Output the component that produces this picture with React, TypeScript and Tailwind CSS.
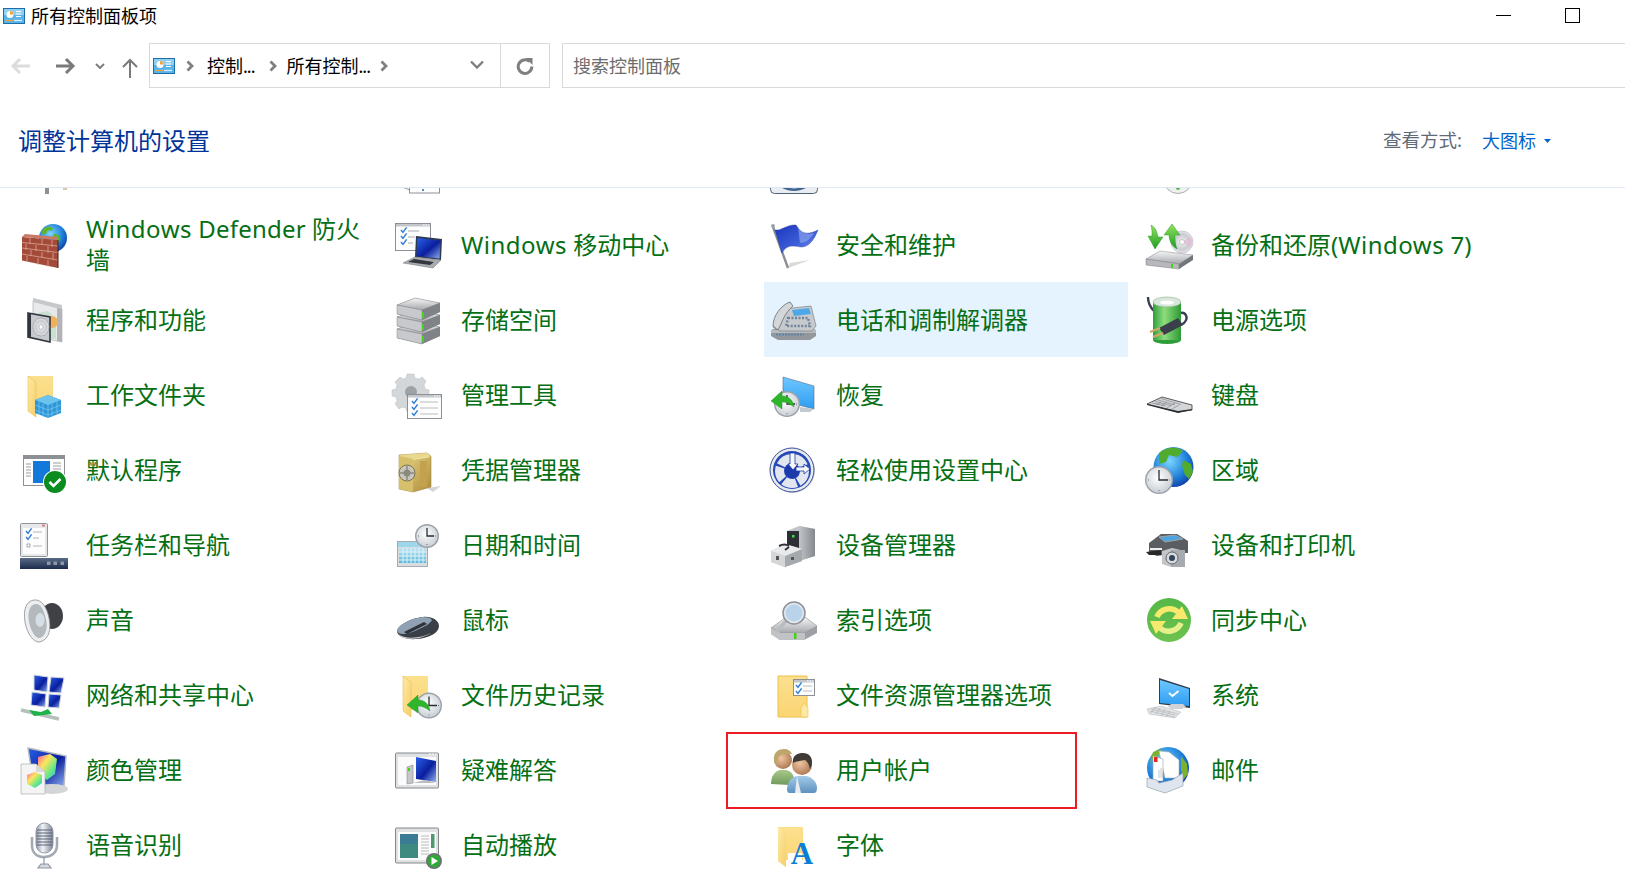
import React from "react";

const Defs = () => (
  <svg className="absolute w-0 h-0" aria-hidden="true">
    <defs>
      <linearGradient id="fold" x1="0" y1="0" x2="0" y2="1"><stop offset="0" stopColor="#fbe08e" /><stop offset="1" stopColor="#fbd573" /></linearGradient>
      <linearGradient id="flap" x1="0" y1="0" x2="1" y2="1"><stop offset="0" stopColor="#fdeaa6" /><stop offset="1" stopColor="#f6cf68" /></linearGradient>
      <linearGradient id="metal" x1="0" y1="0" x2="0" y2="1"><stop offset="0" stopColor="#f6f6f6" /><stop offset="1" stopColor="#a5a8ab" /></linearGradient>
      <linearGradient id="steel" x1="0" y1="0" x2="1" y2="0"><stop offset="0" stopColor="#c3c6c9" /><stop offset="1" stopColor="#85888c" /></linearGradient>
      <linearGradient id="flag" x1="0" y1="0" x2="1" y2="1"><stop offset="0" stopColor="#1c35bb" /><stop offset="0.6" stopColor="#3d5fd9" /><stop offset="1" stopColor="#8aa6f2" /></linearGradient>
      <linearGradient id="deep" x1="0" y1="0" x2="1" y2="1"><stop offset="0" stopColor="#2a62e8" /><stop offset="0.55" stopColor="#0a1e9e" /><stop offset="1" stopColor="#8fb0ee" /></linearGradient>
      <linearGradient id="screen" x1="0" y1="0" x2="0" y2="1"><stop offset="0" stopColor="#6fc7ff" /><stop offset="1" stopColor="#2e9df2" /></linearGradient>
      <linearGradient id="green" x1="0" y1="0" x2="0" y2="1"><stop offset="0" stopColor="#8fe35c" /><stop offset="1" stopColor="#1f9c25" /></linearGradient>
      <linearGradient id="batt" x1="0" y1="0" x2="1" y2="0"><stop offset="0" stopColor="#2f9e3a" /><stop offset="0.4" stopColor="#8fdc7e" /><stop offset="1" stopColor="#2c9a35" /></linearGradient>
      <linearGradient id="gold" x1="0" y1="0" x2="1" y2="1"><stop offset="0" stopColor="#ecd98c" /><stop offset="1" stopColor="#ae8d3a" /></linearGradient>
      <linearGradient id="bar" x1="0" y1="0" x2="0" y2="1"><stop offset="0" stopColor="#5a6b86" /><stop offset="1" stopColor="#1a2b4d" /></linearGradient>
      <linearGradient id="mic" x1="0" y1="0" x2="1" y2="0"><stop offset="0" stopColor="#8f97a8" /><stop offset="0.4" stopColor="#f2f4f8" /><stop offset="1" stopColor="#7e8698" /></linearGradient>
      <linearGradient id="syncg" x1="0" y1="0" x2="0" y2="1"><stop offset="0" stopColor="#55b848" /><stop offset="1" stopColor="#6cc24f" /></linearGradient>
      <linearGradient id="shirtB" x1="0" y1="0" x2="0" y2="1"><stop offset="0" stopColor="#a4cbe8" /><stop offset="1" stopColor="#5d91bf" /></linearGradient>
      <linearGradient id="shirtG" x1="0" y1="0" x2="0" y2="1"><stop offset="0" stopColor="#a9c98a" /><stop offset="1" stopColor="#6f9a5b" /></linearGradient>
      <linearGradient id="rainbow" x1="0" y1="0" x2="1" y2="1"><stop offset="0" stopColor="#ff5ca8" /><stop offset="0.35" stopColor="#ffe65c" /><stop offset="0.7" stopColor="#5ce88a" /><stop offset="1" stopColor="#4ca8ff" /></linearGradient>
      <linearGradient id="cal" x1="0" y1="0" x2="0" y2="1"><stop offset="0" stopColor="#bfe2f2" /><stop offset="1" stopColor="#58b9db" /></linearGradient>
      <radialGradient id="globe" cx="0.4" cy="0.35" r="0.75"><stop offset="0" stopColor="#7cd6ff" /><stop offset="0.6" stopColor="#1e7fd8" /><stop offset="1" stopColor="#0c2f9c" /></radialGradient>
      <radialGradient id="clock" cx="0.45" cy="0.4" r="0.7"><stop offset="0" stopColor="#ffffff" /><stop offset="1" stopColor="#c2c9d0" /></radialGradient>
      <radialGradient id="cd" cx="0.5" cy="0.5" r="0.5"><stop offset="0" stopColor="#f4f4f4" /><stop offset="0.7" stopColor="#c8cbd0" /><stop offset="1" stopColor="#e9e9ee" /></radialGradient>
      <radialGradient id="skin" cx="0.4" cy="0.4" r="0.7"><stop offset="0" stopColor="#eec6a0" /><stop offset="1" stopColor="#a8704c" /></radialGradient>
    </defs>
  </svg>
);

const Clock = ({ cx, cy, r }: { cx: number; cy: number; r: number }) => (
  <g>
    <circle cx={cx} cy={cy} r={r} fill="#9aa1a9" />
    <circle cx={cx} cy={cy} r={r - 1.4} fill="url(#clock)" />
    <path d={`M${cx} ${cy - r + 4}V${cy}H${cx + r - 5}`} fill="none" stroke="#2a2e33" strokeWidth="1.300" />
    <path d={`M${cx} ${cy + r - 3}v-1M${cx - r + 3} ${cy}h1M${cx + r - 3} ${cy}h-1`} stroke="#6d747c" strokeWidth="1" />
  </g>
);
const Tick = ({ x, y, c = "#2f7fd6" }: { x: number; y: number; c?: string }) => (
  <path d={`M${x} ${y + 2}l2 2.400 3.600-5`} fill="none" stroke={c} strokeWidth="1.500" />
);
const Win = ({ x, y, w, h }: { x: number; y: number; w: number; h: number }) => (
  <g>
    <rect x={x + 0.5} y={y + 0.5} width={w - 1} height={h - 1} fill="#fdfdfd" stroke="#8c9096" />
    <rect x={x + 1} y={y + 1} width={w - 2} height="2.500" fill="#c3c7cb" />
    <path d={`M${x + w - 8} ${y + 2}h1.600M${x + w - 5.5} ${y + 2}h1.600M${x + w - 3} ${y + 2}h1`} stroke="#ffffff" strokeWidth="1" />
  </g>
);
const Land = () => (
  <g fill="#5fb52f">
    <path d="M15 6c5-3 11-3 14 0l-3 4-5-1-2 5-5 1-2-3z" />
    <path d="M30 14l7 2 2 6-3 5-4-3-3-6z" />
  </g>
);
const Tall = () => (
  <g>
    <path d="M8 5h25v34H16v7l-8-6z" fill="url(#fold)" />
    <path d="M8 5l8 6v35l-8-6z" fill="url(#flap)" />
    <path d="M8 5l8 6v35l-8-6z" fill="none" stroke="#e8c15a" strokeWidth="0.600" />
  </g>
);
const Hdd = ({ y = 0 }: { y?: number }) => (
  <g transform={`translate(0 ${y})`}>
    <path d="M2 8l18-7 25 5v9l-18 8L2 17z" fill="#8d9094" />
    <path d="M2 8l18-7 25 5-18 7z" fill="url(#metal)" stroke="#8a8d91" strokeWidth="0.500" />
    <path d="M2 8l25 5v10L2 17z" fill="#c7c9cc" stroke="#85888c" strokeWidth="0.500" />
    <path d="M27 13l18-7v9l-18 8z" fill="#7f8286" />
    <rect x="27" y="15" width="2" height="6" fill="#45d21c" />
  </g>
);
const Arrow = ({ x, y }: { x: number; y: number }) => (
  <path transform={`translate(${x} ${y})`} d="M0 10l11-10v5c7 0 11 4 12 11-4-3-7-5-12-5v7z" fill="#2fb52b" stroke="#1d8a22" strokeWidth="0.400" />
);

const I = {
  p0: () => (<g><rect x="25" y="41" width="4" height="7" fill="#8d9196" /><rect x="43" y="42" width="4" height="2" fill="#d9c9a8" /></g>),
  p1: () => (<g><path d="M7 41l8 3" stroke="#9a9da1" /><rect x="14.500" y="38" width="30" height="9" fill="#fff" stroke="#8c9096" /><rect x="27" y="43" width="2" height="2" fill="#3c8fe0" /></g>),
  p2: () => (<g><rect x="0.500" y="20" width="47" height="27.500" rx="4" fill="#e9edf1" stroke="#4d6078" /><path d="M12 38c8 6 16 6 24 0v4c-8 4-16 4-24 0z" fill="#41658f" /></g>),
  p3: () => (<g><circle cx="33" cy="33" r="14.500" fill="#f0f0f0" stroke="#a9acb0" /><circle cx="33" cy="42" r="2" fill="#55b848" /></g>),
  firewall: () => (
    <g>
      <circle cx="33" cy="17" r="14" fill="url(#globe)" />
      <g transform="translate(13 3) scale(.7)"><Land /></g>
      <path d="M2 16l36 3v28L2 39.500z" fill="#a34a3a" />
      <path d="M2 16l3-3 33 3v3z" fill="#c87a66" />
      <path d="M2 21.500l36 3.500M2 27l36 4.500M2 33l36 6M10 17v6M22 18v6M32 19v7M6 23v6M16 24v6M28 25v7M11 29v6M22 31v6M33 32v7M7 35v6M18 37v7M28 39v7" stroke="#dba892" strokeWidth="0.800" fill="none" />
      <path d="M38 19v28" stroke="#4a1f18" />
    </g>
  ),
  mobility: () => (
    <g>
      <Win x={0} y={2} w={36} h={28} />
      <Tick x={6} y={7} /><Tick x={6} y={13} /><Tick x={6} y={19} />
      <path d="M13 10h11M13 16h7M13 22h5" stroke="#a8abb0" />
      <path d="M21 15l26 3-1 21-26-3z" fill="#2d3a4f" />
      <path d="M22.500 17l23 2.500-1 18-23-2.500z" fill="url(#deep)" />
      <path d="M20 36l26 3-8 8-30-5z" fill="#a9adb2" stroke="#6a6e73" strokeWidth="0.500" />
      <path d="M19 38l20 3-4 3-22-3z" fill="#34383e" />
    </g>
  ),
  flag: () => (
    <g>
      <path d="M18 47l22-8-20 3z" fill="#d9d9d9" />
      <path d="M3 6l15 41" stroke="#8b8f94" strokeWidth="2.400" />
      <circle cx="3" cy="5" r="2" fill="#9ea2a7" />
      <path d="M5 9c6 1 13-6 21-5 4 6 8 12 22 5-4 10-9 17-17 17-8-1-14-3-19 6z" fill="url(#flag)" stroke="#1b2d9a" strokeWidth="0.400" />
      <path d="M28 6c4 6 9 8 16 6-4 6-8 10-14 10" fill="#9fb6f4" opacity="0.550" />
    </g>
  ),
  backup: () => (
    <g>
      <circle cx="37" cy="21" r="11" fill="url(#cd)" stroke="#a9acb0" strokeWidth="0.500" />
      <path d="M37 21l9-5a11 11 0 0 1 0 10z" fill="#e8b8d8" opacity="0.700" />
      <circle cx="37" cy="21" r="2.500" fill="#fff" stroke="#999" strokeWidth="0.500" />
      <path d="M1 38l14-8 33 4-14 9z" fill="url(#metal)" stroke="#85888c" strokeWidth="0.500" />
      <path d="M1 38l33 5v5L1 44z" fill="#b6b8bb" stroke="#7a7d81" strokeWidth="0.500" />
      <path d="M34 43l14-9v5l-14 9z" fill="#73767a" />
      <rect x="26" y="43" width="2" height="4" fill="#45d21c" />
      <path d="M6 4c4 2 6 6 7 12h5L10 28 3 15h4c0-4 0-7-1-11z" fill="url(#green)" stroke="#1b8a22" strokeWidth="0.400" />
      <path d="M27 3l8 11h-5c0 5 0 9 2 14-5-3-8-8-8-14h-5z" fill="url(#green)" stroke="#1b8a22" strokeWidth="0.400" />
    </g>
  ),
  programs: () => (
    <g>
      <path d="M13 5l29 8v33l-29-6z" fill="#e8e9ea" stroke="#a0a3a6" strokeWidth="0.600" />
      <path d="M13 2l29 7v4L13 6z" fill="#c6c8ca" />
      <path d="M37 12l5 1v33l-5-1z" fill="#b2b4b7" />
      <path d="M18 17l10-2 8 8v20H20z" fill="#c9dfcf" />
      <circle cx="32" cy="26" r="6" fill="#f0b15e" />
      <path d="M8 17l22 4v25L8 41z" fill="#c6c9cd" stroke="#32363c" strokeWidth="1.600" />
      <path d="M8 17l3 .5v24L8 41z" fill="#32363c" />
      <ellipse cx="21" cy="31" rx="8" ry="9" fill="url(#cd)" stroke="#8d9095" strokeWidth="0.600" />
      <ellipse cx="21" cy="31" rx="2" ry="2.300" fill="#fff" stroke="#8d9095" strokeWidth="0.500" />
    </g>
  ),
  storage: () => (<g><Hdd y={25} /><Hdd y={13} /><Hdd y={1} /></g>),
  phone: () => (
    <g>
      <path d="M1 34l8-3h30l7 3v6l-6 4H8l-7-4z" fill="#93979b" />
      <path d="M1 34h45v3H1z" fill="#b8bbbe" />
      <path d="M6 38.500h28" stroke="#5f86a6" strokeWidth="2.200" strokeDasharray="2 1" />
      <path d="M13 13l28-3 5 20-4 5H10L3 31z" fill="#c6cacd" stroke="#7d8185" strokeWidth="0.700" />
      <path d="M22 14l17-2 2 6-17 2z" fill="#4ea8e8" />
      <path d="M18 22h20l2 8H16z" fill="none" stroke="#6f849a" strokeWidth="2.400" strokeDasharray="2 1.500" />
      <path d="M3 30C3 20 11 9 20 6l3 4c-5 4-10 12-12 18l-3 6z" fill="#d4d7d9" stroke="#666a6e" strokeWidth="0.800" />
    </g>
  ),
  power: () => (
    <g>
      <path d="M3 1c0 8 4 12 6 14M33 18c8-4 11 4 6 9l-10 6" fill="none" stroke="#3a4052" strokeWidth="2.400" />
      <ellipse cx="22" cy="44" rx="14" ry="4" fill="#2f9e3a" />
      <rect x="8" y="6" width="28" height="38" fill="url(#batt)" />
      <ellipse cx="22" cy="6" rx="14" ry="5" fill="#d9e6da" stroke="#8bb48d" strokeWidth="0.600" />
      <ellipse cx="22" cy="6.500" rx="7" ry="2" fill="#fff" />
      <path d="M14 32l19-10 5 7-19 10z" fill="#3a3f49" />
      <path d="M15 32l-10 4M18 37l-10 4" stroke="#d2a768" strokeWidth="2.200" />
    </g>
  ),
  work: () => (
    <g>
      <Tall />
      <path d="M15 29l13-5 13 5v13l-13 5-13-5z" fill="#2f97d8" />
      <path d="M15 29l13 5 13-5-13-5z" fill="#6cc3ee" />
      <path d="M19 31v13M23 33v13M28 34v13M32 33v12M37 31v12M15 34l13 5 13-5M15 39l13 5 13-5" stroke="#88d0f2" strokeWidth="0.600" fill="none" />
    </g>
  ),
  admin: () => (
    <g>
      <path d="M12 3h7l1 4 4 1 3-2 4 4-2 4 1 4 4 1v6l-4 1-1 4 2 4-4 4-3-2-4 1-1 4h-7l-1-4-4-1-3 2-4-5 2-3-1-4-4-1v-6l4-1 1-4-2-3 5-5 3 2 3-1z" fill="#d3d7da" stroke="#babdc1" strokeWidth="0.500" />
      <circle cx="16" cy="21" r="6" fill="#9da2a7" />
      <Win x={12} y={23} w={35} h={25} />
      <Tick x={17} y={28} /><Tick x={17} y={34} /><Tick x={17} y={40} />
      <path d="M25 31h18M25 37h18M25 43h18" stroke="#b9bcc0" />
    </g>
  ),
  recovery: () => (
    <g>
      <path d="M13 6l31 9v23l-31-8z" fill="url(#screen)" stroke="#4d6d8a" strokeWidth="0.600" />
      <path d="M30 36l14 2-4 3H30z" fill="#c5cace" />
      <Clock cx={17} cy={33} r={13} />
      <Arrow x={1} y={20} />
    </g>
  ),
  keyboard: () => (
    <g>
      <path d="M2 33l15-7 30 8v5l-14 2z" fill="#d3d5d8" stroke="#333" strokeWidth="0.800" />
      <path d="M2 33v1l31 8 14-3v-1l-14 2z" fill="#2b2e32" />
      <path d="M7 32l14 3M10 30.500l16 4M13 29l17 5M16 27.500l20 6M11 34l5-3M16 35l6-4M22 37l8-5M27 38l7-4" stroke="#7b7e82" strokeWidth="0.600" fill="none" />
    </g>
  ),
  defaults: () => (
    <g>
      <rect x="3.500" y="9.500" width="41" height="30" fill="#fdfdfd" stroke="#8d9196" />
      <rect x="4" y="10" width="40" height="3" fill="#8d9196" />
      <path d="M6 18h5M6 21h5M6 24h5M6 27h5M6 30h5M33 17h8M33 20h8M33 23h8M33 26h8" stroke="#9b9ea3" />
      <rect x="13" y="15" width="17" height="22" fill="#1278d9" />
      <circle cx="35" cy="36" r="12" fill="#fff" />
      <circle cx="35" cy="36" r="11" fill="#0b8c1e" />
      <path d="M29.500 36l4 4 7-7" fill="none" stroke="#fff" strokeWidth="2.600" />
    </g>
  ),
  safe: () => (
    <g>
      <path d="M32 42l14-2-8 6z" fill="#d5d5d5" />
      <path d="M4 9l28-2 4 3v31l-18 5-14-3z" fill="url(#gold)" stroke="#8d7430" strokeWidth="0.500" />
      <path d="M4 10l14 3v33l-14-3z" fill="#d7c06b" />
      <path d="M18 13l14-3 4 1-18 3z" fill="#f4e6a6" />
      <path d="M4 9l14 4 18-3-4-3z" fill="#e9d88f" />
      <path d="M25 15h7v26h-7z" fill="#c2a24c" />
      <circle cx="12" cy="27" r="8" fill="#c8c6bd" stroke="#7d7650" />
      <circle cx="12" cy="27" r="3.500" fill="#8c8a7d" />
      <path d="M12 20v14M5 27h14" stroke="#8c8a7d" strokeWidth="1.500" />
    </g>
  ),
  ease: () => (
    <g>
      <circle cx="23" cy="25" r="22" fill="#d6d8db" />
      <circle cx="22" cy="24" r="22" fill="#e8ebee" stroke="#3a4e94" strokeWidth="1" />
      <circle cx="22" cy="24" r="19" fill="#2648b8" />
      <circle cx="22" cy="25" r="12.500" fill="none" stroke="#e2e6ef" strokeWidth="9" strokeDasharray="13 2" />
      <circle cx="22" cy="25" r="7" fill="#1c3aa8" />
      <path d="M20 7h5v11h3l-5 6-5-6h2zM26 21h8v-3l6 5-6 5v-3h-8z" fill="#f6f7fa" stroke="#1c3aa8" strokeWidth="0.800" />
    </g>
  ),
  region: () => (
    <g>
      <circle cx="28.500" cy="21" r="20" fill="url(#globe)" />
      <path d="M14 7c7-6 18-7 24-2l-6 6-8-2-3 7-7 2zM38 14l8 4 2 8-4 7-4-4-3-9z" fill="#51ab2c" />
      <Clock cx={14} cy={34} r={14} />
    </g>
  ),
  taskbar: () => (
    <g>
      <rect x="0.500" y="2.500" width="27" height="33" rx="1" fill="#e6e8ea" stroke="#8f9399" />
      <rect x="3" y="7" width="22" height="26" fill="#fdfdfd" />
      <rect x="22" y="3.500" width="3" height="2" fill="#d98080" />
      <Tick x={6} y={8} /><Tick x={6} y={14} />
      <rect x="7" y="23" width="3" height="3" fill="#fff" stroke="#777" strokeWidth="0.600" />
      <path d="M13 11h9M13 17h6M13 25h9" stroke="#b1b4b8" />
      <rect x="0" y="37" width="48" height="11" fill="url(#bar)" />
      <path d="M27 40.500h3.500v3.500H27zM33.500 40.500H37v3.500h-3.500zM40.500 40.500H44v3.500h-3.500z" fill="#8c97a8" />
    </g>
  ),
  date: () => (
    <g>
      <rect x="2.500" y="20.500" width="30" height="25" fill="#d9dde0" stroke="#a7abaf" />
      <rect x="3" y="21" width="29" height="5" fill="#9fd7ea" />
      <rect x="4" y="27" width="27" height="15" fill="url(#cal)" />
      <path d="M8 27v15M12 27v15M16 27v15M20 27v15M24 27v15M28 27v15M4 31h27M4 35h27M4 39h27" stroke="#e8f6fb" strokeWidth="0.900" />
      <Clock cx={32} cy={15} r={12} />
    </g>
  ),
  device: () => (
    <g>
      <path d="M17 10l12-5 16 3v27l-16 5-12-1z" fill="#c3c5c8" />
      <path d="M17 10h12v26H17z" fill="#2c2f33" />
      <path d="M29 5l16 3v27l-16 5z" fill="url(#steel)" />
      <rect x="22" y="14" width="2.500" height="2.500" fill="#3fdc4a" />
      <path d="M1 30l14-7 17 5v12l-17 6-14-5z" fill="#c5c7ca" />
      <path d="M1 30l14 5v11l-14-5z" fill="#d4d6d8" />
      <path d="M15 35l17-7v12l-17 6z" fill="#a5a8ac" />
      <path d="M1 30l14-7 17 5-17 7z" fill="#e9eaeb" />
      <rect x="6" y="35" width="3" height="4" fill="#555" />
      <rect x="21" y="36" width="3" height="3" fill="#555" />
      <path d="M9 25c4-2 7-2 10 0M15 29l4-3" fill="none" stroke="#2f3237" strokeWidth="2" />
    </g>
  ),
  printer: () => (
    <g>
      <path d="M4 22l12-9h16l11 7v12H30l-18 3-8-3z" fill="#5a5d61" />
      <path d="M14 16l16-2 8 4-18 3z" fill="#4fa4e0" stroke="#9fa3a8" strokeWidth="1" />
      <path d="M1 31l15-2v5H4z" fill="#26282b" />
      <path d="M5 27h12v2H5z" fill="#ededed" />
      <path d="M17 30l10-3 13 3v16H26l-9-3z" fill="#c3c5c8" />
      <rect x="26" y="29" width="14" height="17" fill="#a7aaae" />
      <circle cx="27" cy="37" r="6" fill="#d9dbde" stroke="#63666a" />
      <circle cx="27" cy="37" r="3" fill="#31465a" />
    </g>
  ),
  sound: () => (
    <g>
      <ellipse cx="32" cy="20" rx="11" ry="13" fill="#3f4145" />
      <path d="M14 4c-8 1-11 10-9 22s9 21 15 20c10-3 11-14 9-24S22 3 14 4z" fill="#eceef0" stroke="#8a8d91" strokeWidth="0.800" />
      <path d="M15 8c-5 1-8 8-6 18s7 17 11 16c6-2 8-11 6-19S21 7 15 8z" fill="#b4b9be" />
      <ellipse cx="20" cy="24" rx="4.500" ry="7" fill="#d3dfe5" />
    </g>
  ),
  mouse: () => (
    <g>
      <path d="M2 35c1-6 14-13 26-14 8-1 16 3 16 9 0 7-10 12-22 13-12 1-20-3-20-8z" fill="#3a3f47" />
      <path d="M2 35c1-6 14-13 26-14 5 0 8 1 9 3-2 4-8 7-15 10-7 4-19 6-20 1z" fill="#8fa1b3" />
      <path d="M9 36l20-10 3 2-20 10z" fill="#2f3338" />
      <path d="M3 38c6 5 22 5 33-1-8 6-28 9-33 1z" fill="#c9ccd0" />
    </g>
  ),
  index: () => (
    <g>
      <path d="M1 32l14-10 20-1 12 9v7l-13 7H10l-9-6z" fill="#9da0a4" />
      <path d="M1 32l14-10 20-1 12 9-12 7H11z" fill="url(#metal)" stroke="#8a8d91" strokeWidth="0.500" />
      <path d="M1 32l10 5h24v7H10l-9-6z" fill="#c0c2c5" />
      <rect x="24" y="37" width="2.500" height="6" fill="#45d21c" />
      <path d="M16 25L6 36" stroke="#b9bcc0" strokeWidth="3.600" />
      <circle cx="24" cy="17" r="11" fill="#dfe7ee" stroke="#8d9197" strokeWidth="1.500" />
      <circle cx="24" cy="17" r="8.500" fill="#b9d4ea" />
    </g>
  ),
  sync: () => (
    <g>
      <circle cx="24" cy="24" r="22" fill="url(#syncg)" />
      <path d="M12 21c3-8 14-11 21-5" fill="none" stroke="#f7e96e" strokeWidth="5.500" />
      <path d="M27 23h16l-6-13z" fill="#f7e96e" />
      <path d="M36 27c-3 8-14 11-21 5" fill="none" stroke="#e6f08a" strokeWidth="5.500" />
      <path d="M21 25H5l6 13z" fill="#f7e96e" />
    </g>
  ),
  network: () => (
    <g>
      <path d="M14 4l14 2-1 15-13-2z" fill="url(#deep)" stroke="#cfd4dc" />
      <path d="M31 6l13 1-3 15-12-1z" fill="url(#deep)" stroke="#cfd4dc" />
      <path d="M12 21l14 2-1 13-14-2z" fill="url(#deep)" stroke="#cfd4dc" />
      <path d="M29 23l12 1-2 13-11-1z" fill="url(#deep)" stroke="#cfd4dc" />
      <path d="M1 39l38 9" stroke="#b5c0bb" strokeWidth="3.500" />
      <path d="M9 39l12 2 7-3 4 5-18 2z" fill="#1fb14a" />
    </g>
  ),
  history: () => (
    <g>
      <Tall />
      <Clock cx={34} cy={34.500} r={13} />
      <Arrow x={12} y={24} />
    </g>
  ),
  options: () => (
    <g>
      <path d="M8 5h29v41H8z" fill="url(#fold)" stroke="#eec04c" />
      <path d="M34 32l4 5v9h-7v-9z" fill="#fde9a6" stroke="#eec04c" strokeWidth="0.600" />
      <Win x={23} y={8} w={22} h={17} />
      <Tick x={26} y={12} /><Tick x={26} y={18} />
      <path d="M33 15h9M33 20h9" stroke="#b9bcc0" />
    </g>
  ),
  system: () => (
    <g>
      <path d="M14 7l31 10v20l-31-4z" fill="#2f3e4e" />
      <path d="M15 9l29 9v17l-29-3z" fill="url(#screen)" />
      <path d="M24 22l3.500 3 6-5" fill="none" stroke="#fff" strokeWidth="1.800" />
      <path d="M26 33h12l3 3-4 2H27l-4-2z" fill="#d0d2d5" />
      <path d="M2 38l14-3 20 6-6 6-26-4z" fill="#e0e2e4" stroke="#b3b6b9" strokeWidth="0.500" />
      <path d="M6 38l24 6M9 37l24 6M5 40l25 6M10 36l-4 6M15 37l-4 6M20 38l-4 7M25 40l-4 6" stroke="#a5a8ab" strokeWidth="0.500" />
    </g>
  ),
  color: () => (
    <g>
      <path d="M8 2l38 8-2 30H14z" fill="url(#deep)" stroke="#b5babf" strokeWidth="1.400" />
      <ellipse cx="32" cy="43" rx="16" ry="5" fill="#d3d5d7" />
      <path d="M18 11l12-3 7 5-2 15-8 6-9-7z" fill="url(#rainbow)" />
      <path d="M1 18h15l9 8v22H1z" fill="#f4f4f4" stroke="#b4b6b8" strokeWidth="0.800" />
      <path d="M16 18v8h9" fill="#d9d9d9" />
      <path d="M7 29l8-3 7 3v8l-7 5-8-4z" fill="url(#rainbow)" />
    </g>
  ),
  trouble: () => (
    <g>
      <rect x="0.500" y="7" width="43" height="35" rx="1" fill="#dfe1e3" stroke="#83878c" />
      <rect x="3" y="11" width="38" height="28" fill="#fbfbfb" />
      <path d="M34 8h2M37 8h2M40 8h1.500" stroke="#fff" />
      <path d="M21 11l20 4v21l-20-3z" fill="url(#deep)" />
      <path d="M12 21l6-2v18l-6 1z" fill="#c5c8cb" stroke="#777" strokeWidth="0.500" />
      <rect x="13" y="22" width="2" height="3" fill="#45d21c" />
      <path d="M18 37l12-3 11 3H18z" fill="#b9bcc0" />
    </g>
  ),
  users: () => (
    <g>
      <path d="M1 38c0-8 4-13 9-14h6c5 1 8 5 8 9l-4 6z" fill="url(#shirtG)" />
      <circle cx="13" cy="14" r="9" fill="url(#skin)" />
      <path d="M4 14C3 7 8 3 14 3c4 0 7 2 8 5-5 0-11 0-13 2-2 2-1 5-2 9-2-1-3-3-3-5z" fill="#bda76a" />
      <path d="M19 47c-3-1-2-6-1-9 2-5 6-8 10-8h8c6 1 11 6 11 12 0 3-1 5-3 5z" fill="url(#shirtB)" />
      <path d="M27 30l4 17-6 0z" fill="#e6ecf2" />
      <circle cx="32" cy="19" r="10" fill="url(#skin)" />
      <path d="M23 17c-1-7 4-10 10-10 6 0 9 4 9 9 0 3-1 5-2 7-1-4-2-7-5-9-4 1-9 1-12 3z" fill="#3f3a36" />
    </g>
  ),
  mail: () => (
    <g>
      <circle cx="23" cy="22" r="21" fill="url(#globe)" />
      <path d="M36 10l6 8 1 10-5 6-2-10zM8 6l8-3-2 6-6 4-3 4z" fill="#7cb22c" />
      <path d="M14 5l10 1 10 8v18H20z" fill="#fff" stroke="#a8aeb8" strokeWidth="0.600" />
      <path d="M8 10l10 3v22H8z" fill="#fff" stroke="#98a0ac" strokeWidth="0.600" />
      <rect x="9" y="11" width="3.500" height="5" fill="#e8261c" />
      <path d="M14 24v8M16 22v10M18 26v6" stroke="#9aa3ad" strokeWidth="0.600" />
      <path d="M2 32l10 2 2 3 13-3 11-7v13l-18 7L2 41z" fill="#dfe5ee" stroke="#8b96a8" strokeWidth="0.600" />
    </g>
  ),
  mic: () => (
    <g>
      <path d="M12 16v8c0 8 5 12 12 12s13-4 13-12v-8" fill="none" stroke="#a4aab4" strokeWidth="2.600" />
      <rect x="16" y="2" width="17" height="30" rx="8.500" fill="url(#mic)" stroke="#7a8292" strokeWidth="0.800" />
      <path d="M17 9h15M17 12h15M17 15h15M17 18h15M17 21h15M17 24h15" stroke="#4f5766" strokeWidth="0.900" />
      <path d="M24 36v8M18 47h13l-3-4h-7z" fill="#d5d8de" stroke="#8f96a2" strokeWidth="1.200" />
    </g>
  ),
  autoplay: () => (
    <g>
      <rect x="0.500" y="7" width="43" height="35" rx="1" fill="#dfe1e3" stroke="#83878c" />
      <rect x="3" y="11" width="38" height="28" fill="#fbfbfb" />
      <rect x="5" y="13" width="18" height="24" fill="#3f8a80" />
      <rect x="5" y="13" width="18" height="10" fill="#3a75a0" opacity="0.700" />
      <path d="M26 15h8M26 18h8M26 21h8M26 24h8M26 27h8M26 30h8M26 33h8" stroke="#b9bcc0" />
      <rect x="36" y="13" width="3.500" height="14" fill="#4d9a70" />
      <circle cx="39" cy="40" r="8" fill="#6d7176" />
      <circle cx="39" cy="40" r="6.300" fill="#2ea836" />
      <path d="M36.500 36l6.500 4-6.500 4z" fill="#fff" />
    </g>
  ),
  fonts: () => (
    <g>
      <path d="M8 6h25v33H16v7l-8-6z" fill="url(#fold)" />
      <path d="M8 6l8 6v34l-8-6z" fill="url(#flap)" />
      <rect x="18" y="32" width="14" height="12" fill="#fff" />
      <text x="32" y="43" textAnchor="middle" fontSize="31" fontWeight="700" fill="#0b7fd2" className="[font-family:'Liberation_Serif',serif]">A</text>
    </g>
  ),
};

type Item = { label?: string; lines?: string[]; icon: () => React.ReactNode; active?: boolean; marked?: boolean };

const items: Item[] = [
  { icon: I.p0 }, { icon: I.p1 }, { icon: I.p2 }, { icon: I.p3 },
  { lines: ["Windows Defender 防火", "墙"], icon: I.firewall },
  { label: "Windows 移动中心", icon: I.mobility },
  { label: "安全和维护", icon: I.flag },
  { label: "备份和还原(Windows 7)", icon: I.backup },
  { label: "程序和功能", icon: I.programs },
  { label: "存储空间", icon: I.storage },
  { label: "电话和调制解调器", icon: I.phone, active: true },
  { label: "电源选项", icon: I.power },
  { label: "工作文件夹", icon: I.work },
  { label: "管理工具", icon: I.admin },
  { label: "恢复", icon: I.recovery },
  { label: "键盘", icon: I.keyboard },
  { label: "默认程序", icon: I.defaults },
  { label: "凭据管理器", icon: I.safe },
  { label: "轻松使用设置中心", icon: I.ease },
  { label: "区域", icon: I.region },
  { label: "任务栏和导航", icon: I.taskbar },
  { label: "日期和时间", icon: I.date },
  { label: "设备管理器", icon: I.device },
  { label: "设备和打印机", icon: I.printer },
  { label: "声音", icon: I.sound },
  { label: "鼠标", icon: I.mouse },
  { label: "索引选项", icon: I.index },
  { label: "同步中心", icon: I.sync },
  { label: "网络和共享中心", icon: I.network },
  { label: "文件历史记录", icon: I.history },
  { label: "文件资源管理器选项", icon: I.options },
  { label: "系统", icon: I.system },
  { label: "颜色管理", icon: I.color },
  { label: "疑难解答", icon: I.trouble },
  { label: "用户帐户", icon: I.users, marked: true },
  { label: "邮件", icon: I.mail },
  { label: "语音识别", icon: I.mic },
  { label: "自动播放", icon: I.autoplay },
  { label: "字体", icon: I.fonts },
];

const CpIcon = () => (
  <svg viewBox="0 0 22 16" className="w-[22px] h-4 shrink-0">
    <rect x="0.500" y="0.500" width="21" height="15" fill="#5bb4e8" stroke="#1c6ca8" />
    <rect x="1" y="1" width="20" height="6" fill="#8fd0f2" />
    <circle cx="7" cy="6.500" r="3.500" fill="#fff" />
    <path d="M7 6.500V3a3.500 3.500 0 0 1 3.500 3.500z" fill="#f2a33a" />
    <path d="M13 3.500h5M13 6h5M13 8.500h5" stroke="#fff" strokeWidth="1.200" />
    <path d="M3 12.500h7" stroke="#f2a33a" strokeWidth="1.200" />
    <path d="M11 12.500h8" stroke="#d9f0fb" strokeWidth="1.200" />
  </svg>
);

const Crumb = ({ className }: { className: string }) => (
  <svg viewBox="0 0 8 12" className={`w-2 h-3 shrink-0 ${className}`}>
    <path d="M1.500 1.500L6 6l-4.500 4.500" fill="none" stroke="#7f7f7f" strokeWidth="2.800" />
  </svg>
);

const Label = ({ text }: { text: string }) => (
  <>
    {text.split(/(Windows|Defender)/).map((part, i) =>
      part === "Windows" ? (
        <span key={i} className="tracking-[0.5px]">{part}</span>
      ) : part === "Defender" ? (
        <span key={i} className="tracking-[0.2px]">{part}</span>
      ) : (
        <span key={i}>{part}</span>
      )
    )}
  </>
);

const Cell = ({ item }: { item: Item }) => {
  const Icon = item.icon;
  return (
    <div className={`relative flex items-center gap-[18px] pl-[6px] ${item.active ? "bg-[#e5f3ff]" : ""}`}>
      <svg viewBox="0 0 48 48" className="w-12 h-12 shrink-0 overflow-visible"><Icon /></svg>
      {item.lines ? (
        <div className="pb-[2px] text-[24px] leading-[31px] text-[#056f14] whitespace-nowrap">
          {item.lines.map((l) => (<div key={l}><Label text={l} /></div>))}
        </div>
      ) : (
        <span className="text-[24px] leading-[31px] text-[#056f14] whitespace-nowrap"><Label text={item.label ?? ""} /></span>
      )}
      {item.marked && <div className="absolute -left-[38px] top-0 w-[351px] h-[77px] border-2 border-[#ed1c24]" />}
    </div>
  );
};

export default function App() {
  return (
    <div className="relative w-[1625px] h-[871px] overflow-hidden bg-white flex flex-col [font-family:'Noto_Sans','Noto_Sans_CJK_SC',sans-serif]">
      <Defs />
      <div className="h-[31px] shrink-0 flex items-center pl-[3px]">
        <CpIcon />
        <span className="ml-[6px] text-[18px] leading-6 text-black">所有控制面板项</span>
        <div className="ml-auto flex items-center gap-[54px] pr-[45px]">
          <div className="w-[15px] h-px bg-black" />
          <div className="w-[15px] h-[15px] border border-black" />
        </div>
      </div>

      <div className="mt-3 h-[45px] shrink-0 flex items-center pl-[10px]">
        <svg viewBox="0 0 20 18" className="w-5 h-[18px] shrink-0"><path d="M20 9H3M10 2L3 9l7 7" fill="none" stroke="#dcdcdc" strokeWidth="3" /></svg>
        <svg viewBox="0 0 20 18" className="ml-[26px] w-5 h-[18px] shrink-0"><path d="M0 9h17M10 2l7 7-7 7" fill="none" stroke="#7a7a7a" strokeWidth="3" /></svg>
        <svg viewBox="0 0 10 6" className="ml-[19px] w-[10px] h-[6px] shrink-0"><path d="M1 1l4 4 4-4" fill="none" stroke="#7f7f7f" strokeWidth="2" /></svg>
        <svg viewBox="0 0 16 20" className="ml-[17px] mt-[4px] w-4 h-5 shrink-0"><path d="M8 20V2M1 9l7-7 7 7" fill="none" stroke="#7a7a7a" strokeWidth="2" /></svg>
        <div className="ml-[11px] w-[401px] h-full shrink-0 flex items-center border border-[#d9d9d9] text-[18px] text-black">
          <div className="pl-[3px] flex items-center"><CpIcon /></div>
          <Crumb className="ml-[11px]" />
          <span className="ml-[13px] leading-6 whitespace-nowrap">控制<span className="tracking-[-1px]">...</span></span>
          <Crumb className="ml-[15px]" />
          <span className="ml-[9px] leading-6 whitespace-nowrap">所有控制<span className="tracking-[-1px]">...</span></span>
          <Crumb className="ml-[10px]" />
          <svg viewBox="0 0 14 9" className="ml-auto mr-4 -mt-[2px] w-[14px] h-[9px] shrink-0"><path d="M1 1.500l6 6 6-6" fill="none" stroke="#7f7f7f" strokeWidth="2.400" /></svg>
          <div className="w-[49px] h-full shrink-0 flex items-center justify-center border-l border-[#d9d9d9]">
            <svg viewBox="0 0 18 18" className="w-[18px] h-[18px]"><path d="M13.500 4.500A6.800 6.800 0 1 0 15.800 9.500" fill="none" stroke="#7f7f7f" strokeWidth="3" /><path d="M9.500 1h7v7z" fill="#7f7f7f" /></svg>
          </div>
        </div>
        <div className="ml-[12px] flex-1 h-full flex items-center pl-[10px] pt-px border-y border-l border-[#d9d9d9] text-[18px] leading-6 text-[#6d6d6d]">搜索控制面板</div>
      </div>

      <div className="h-[100px] shrink-0 pl-[18px] pr-[74px] pt-[7px] flex items-center justify-between border-b border-[#e0e8f5]">
        <h1 className="text-[24px] leading-8 font-normal text-[#003399]">调整计算机的设置</h1>
        <div className="flex items-center">
          <span className="-mt-[2px] text-[18.500px] leading-6 text-[#5f6b76]">查看方式:</span>
          <span className="ml-5 text-[18px] leading-6 text-[#0066cc]">大图标</span>
          <svg viewBox="0 0 7 4" className="ml-2 w-[7px] h-1"><path d="M0 0h7L3.500 4z" fill="#0066cc" /></svg>
        </div>
      </div>

      <main className="flex-1 min-h-0 overflow-hidden">
        <div className="-mt-[56px] pl-[14px] grid grid-cols-[repeat(4,364px)] gap-x-[11px] auto-rows-[75px]">
          {items.map((it, i) => (<Cell key={i} item={it} />))}
        </div>
      </main>
    </div>
  );
}
